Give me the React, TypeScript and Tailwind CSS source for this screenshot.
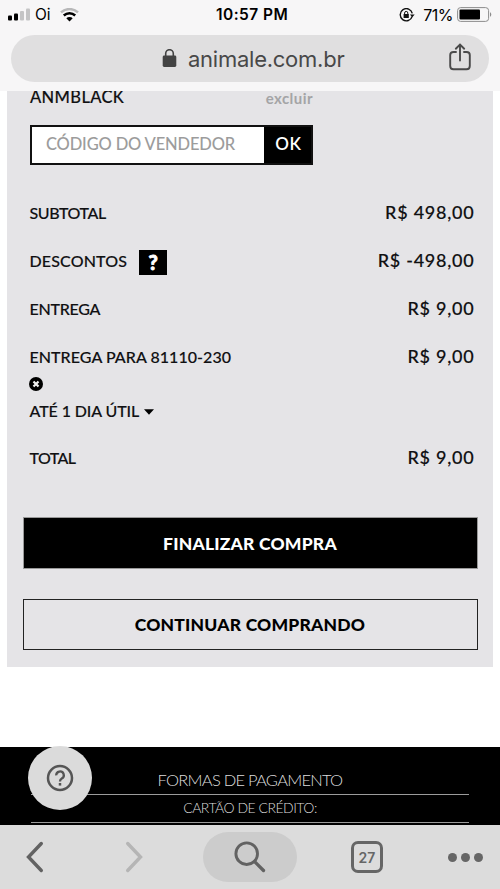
import type { ReactNode } from 'react';

function StatusBar() {
  return (
    <div className="flex h-[29px] items-center pl-[8px] pr-[7px] text-black">
      <div className="flex w-[208px] items-center">
        <svg width="23" height="13" viewBox="0 0 23 13">
          <rect x="0" y="7.5" width="4" height="5" rx="1" />
          <rect x="6" y="5.5" width="4" height="7" rx="1" />
          <rect x="12" y="3" width="4" height="9.5" rx="1" fill="#c4c4c5" />
          <rect x="18" y="0.5" width="4" height="12" rx="1" fill="#c4c4c5" />
        </svg>
        <span className="ml-[4px] text-[15.5px] leading-[28px]">Oi</span>
        <svg className="ml-[9px]" width="19" height="14" viewBox="0 0 19 14" fill="none">
          <path d="M1 4.4 A12.6 12.6 0 0 1 18 4.4" stroke="#b8b8b9" strokeWidth="2.5" />
          <path d="M3.8 7.5 A8.4 8.4 0 0 1 15.2 7.5" stroke="#000" strokeWidth="2.5" />
          <path d="M6.3 10.2 A4.6 4.6 0 0 1 12.7 10.2 L9.5 13.4 Z" fill="#000" />
        </svg>
      </div>
      <span className="text-[15.5px] font-semibold leading-[28px] tracking-[0.45px]">10:57 PM</span>
      <div className="ml-auto flex items-center">
        <svg width="16" height="14" viewBox="0 0 16 14" fill="none" stroke="#111">
          <path d="M13.2 8.4 A6.1 6.1 0 1 1 13.3 5.4" strokeWidth="1.4" />
          <path d="M10.9 6.4 H15.7 L13.3 9.3 Z" fill="#111" stroke="none" />
          <rect x="4.6" y="6" width="5.2" height="4" fill="#111" stroke="none" />
          <path d="M5.6 6.4 V5 A1.6 1.6 0 0 1 8.8 5 V6.4" strokeWidth="1" />
        </svg>
        <span className="ml-[8px] text-[16px] leading-[28px] tracking-[-0.5px]">71%</span>
        <svg className="ml-[4px]" width="36" height="15" viewBox="0 0 36 15">
          <rect x="0.6" y="0.6" width="31" height="13.8" rx="3" fill="none" stroke="#8c8c8c" />
          <rect x="2.5" y="2.6" width="20.5" height="9.8" rx="1" />
          <path d="M33 5 Q35.6 7.5 33 10 Z" fill="#8c8c8c" />
        </svg>
      </div>
    </div>
  );
}

function AddressBar() {
  return (
    <div className="mx-[11px] mt-[6px] flex h-[47px] items-center rounded-full bg-[#e0dfe0] text-[#484848]">
      <svg className="ml-[151px]" width="15" height="19" viewBox="0 0 15 19">
        <rect x="0.7" y="6.5" width="13.6" height="11.5" rx="1.4" fill="#434343" />
        <path d="M3.7 7 V4.5 A3.8 3.8 0 0 1 11.3 4.5 V7" fill="none" stroke="#434343" strokeWidth="1.6" />
      </svg>
      <span className="ml-[11px] text-[22px] leading-[46px] tracking-[-0.25px]">animale.com.br</span>
      <svg className="mb-[3px] ml-auto mr-[18px]" width="22" height="28" viewBox="0 0 22 28" fill="none" stroke="#4a4a4a" strokeWidth="1.9" strokeLinecap="round">
        <path d="M7 9 H4.5 Q1.2 9 1.2 12 V23 Q1.2 26.3 4.5 26.3 H17.5 Q20.8 26.3 20.8 23 V12 Q20.8 9 17.5 9 H15" />
        <path d="M11 17.5 V2 M6.8 5.7 L11 1.6 L15.2 5.7" />
      </svg>
    </div>
  );
}

function Row({ label, price }: { label: ReactNode; price: string }) {
  return (
    <div className="flex h-[48px] justify-between">
      <div className="flex items-center text-[16px] leading-[48px]">{label}</div>
      <span className="text-[18px] leading-[47px] tracking-[0.75px]">{price}</span>
    </div>
  );
}

function Summary() {
  return (
    <main className="mx-[7px] h-[576px] overflow-hidden bg-[#e5e4e7] font-['Lato','Liberation_Sans',sans-serif] font-medium text-[#101012]">
      <div className="mt-[-4px] flex h-[38px] items-start justify-between pl-[23px] pr-[180px] leading-[20px]">
        <span className="text-[16.5px] tracking-[0.35px] [-webkit-text-stroke:0.15px]">ANMBLACK</span>
        <span className="pt-[1px] text-[15px] font-bold tracking-[0.45px] text-[#a4a4a6]">excluir</span>
      </div>
      <div className="ml-[23px] flex h-[40px] w-[283px] border-2 border-[#111] bg-white">
        <div className="flex-1 pl-[14px] text-[16.5px] leading-[34px] tracking-[-0.15px] text-[#9c9c9c]">CÓDIGO DO VENDEDOR</div>
        <button className="w-[47px] bg-black pb-[3px] pl-[2px] text-[17px] font-semibold leading-[33px] tracking-[0.8px] text-white">OK</button>
      </div>
      <div className="pl-[22.5px] pr-[18.5px] pt-[24px] [-webkit-text-stroke:0.15px]">
        <Row label={<span className="tracking-[-0.4px]">SUBTOTAL</span>} price="R$ 498,00" />
        <Row
          label={
            <>
              <span className="tracking-[0.15px]">DESCONTOS</span>
              <span className="ml-[12px] mt-[2px] flex h-[25px] w-[28px] items-center justify-center bg-black text-[20px] font-black text-white [-webkit-text-stroke:0.8px]">
                ?
              </span>
            </>
          }
          price="R$ -498,00"
        />
        <Row label={<span className="tracking-[-0.25px]">ENTREGA</span>} price="R$ 9,00" />
        <Row label={<span className="tracking-[0.05px]">ENTREGA PARA 81110-230</span>} price="R$ 9,00" />
        <div className="flex h-[53px] flex-col text-[16px]">
          <svg className="ml-[-0.5px] mt-[-4px]" width="14" height="14" viewBox="0 0 14 14">
            <circle cx="7" cy="7" r="7" />
            <path d="M4.5 4.5 L9.5 9.5 M9.5 4.5 L4.5 9.5" stroke="#f2f2f2" strokeWidth="2.2" />
          </svg>
          <div className="mt-[9px] flex items-center leading-[22px]">
            <span className="tracking-[-0.1px]">ATÉ 1 DIA ÚTIL</span>
            <svg className="ml-[5px] mt-[2px]" width="10" height="6" viewBox="0 0 10 6">
              <path d="M0 0.3 H10 L5 5.8 Z" />
            </svg>
          </div>
        </div>
        <Row label={<span className="tracking-[-0.6px]">TOTAL</span>} price="R$ 9,00" />
      </div>
      <div className="mt-[35px] flex flex-col gap-[30px] px-[15.5px] text-[17.5px] font-black tracking-[0.2px]">
        <button className="h-[52px] border border-[#999] bg-black pt-[2px] text-white">FINALIZAR COMPRA</button>
        <button className="h-[51px] border-[1.5px] border-[#222] pt-[2px] text-black">CONTINUAR COMPRANDO</button>
      </div>
    </main>
  );
}

function Footer() {
  return (
    <footer className="relative mt-[80px] h-[78px] bg-black px-[31px] text-center font-['Lato','Liberation_Sans',sans-serif] font-light text-[#dcdcdc]">
      <div className="h-[48px] border-b border-[#9b9b9b] pt-[22px] text-[16.5px] leading-[22px] tracking-[-0.75px]">FORMAS DE PAGAMENTO</div>
      <div className="h-[28px] border-b border-[#9b9b9b] text-[14px] leading-[26px] tracking-[-0.5px]">CARTÃO DE CRÉDITO:</div>
      <button className="absolute left-[28px] top-[-1px] flex size-[64px] items-center justify-center rounded-full bg-[#dbdbdb]">
        <svg width="28" height="28" viewBox="0 0 28 28" fill="none" stroke="#555" strokeWidth="2.5">
          <circle cx="14" cy="14" r="12" />
          <path d="M10.2 11.4 A3.8 3.8 0 1 1 15.8 14.6 Q14 15.7 14 17.5" strokeWidth="2.3" />
          <path d="M14 19 V21.6" strokeWidth="2.5" />
        </svg>
      </button>
    </footer>
  );
}

function Toolbar() {
  return (
    <nav className="flex h-[64px] items-center bg-[#dcdcdc]">
      <svg className="ml-[26px]" width="18" height="32" viewBox="0 0 18 32" fill="none" stroke="#626262" strokeWidth="3.4" strokeLinecap="round">
        <path d="M15.3 2.5 L2.5 16 L15.3 29.5" />
      </svg>
      <svg className="ml-[81px]" width="18" height="32" viewBox="0 0 18 32" fill="none" stroke="#b5b5b5" strokeWidth="3.4" strokeLinecap="round">
        <path d="M2.7 2.5 L15.5 16 L2.7 29.5" />
      </svg>
      <div className="ml-[60px] flex h-[50px] w-[94px] items-center justify-center rounded-full bg-[#cccccc]">
        <svg width="32" height="32" viewBox="0 0 32 32" fill="none" stroke="#626262" strokeWidth="2.9" strokeLinecap="round">
          <circle cx="12.7" cy="12.7" r="10.8" />
          <path d="M20.6 20.6 L29.5 29.5" strokeWidth="3.3" />
        </svg>
      </div>
      <div className="ml-[54px] flex h-[32px] w-[32px] items-center justify-center rounded-[7px] border-3 border-[#666] text-[14px] font-semibold text-[#666]">
        27
      </div>
      <div className="ml-[65px] flex gap-[4px]">
        <i className="size-[9px] rounded-full bg-[#666]" />
        <i className="size-[9px] rounded-full bg-[#666]" />
        <i className="size-[9px] rounded-full bg-[#666]" />
      </div>
    </nav>
  );
}

export default function App() {
  return (
    <div className="h-[889px] w-[500px] overflow-hidden bg-white font-['Inter','Liberation_Sans',sans-serif]">
      <header className="h-[91px] bg-[#f7f6f7]">
        <StatusBar />
        <AddressBar />
      </header>
      <Summary />
      <Footer />
      <Toolbar />
    </div>
  );
}
